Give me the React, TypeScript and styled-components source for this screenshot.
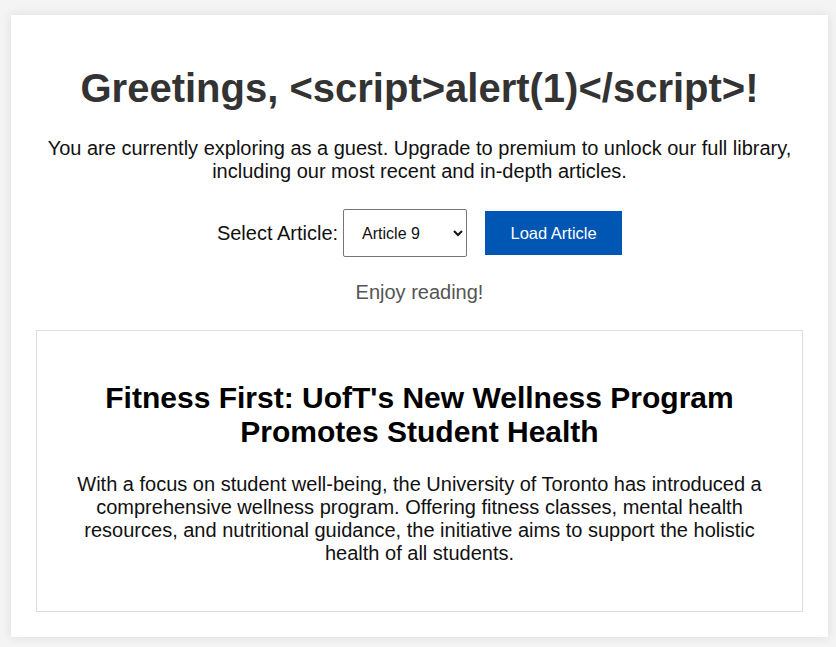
import * as React from 'react';
import styled, { createGlobalStyle } from 'styled-components';

const GlobalStyle = createGlobalStyle`
  body {
    margin: 0;
    padding: 15px 8px 11px 11px;
    background: #f4f4f4;
    font-family: 'Liberation Sans', Arial, sans-serif;
    color: #111;
  }
`;

const Container = styled.div`
  background: #fff;
  padding: 25px;
  box-shadow: 0 0 10px rgba(0, 0, 0, 0.1);
  text-align: center;
`;

const Title = styled.h1`
  margin: 25px 0 26px;
  font-size: 40px;
  line-height: 46px;
  font-weight: bold;
  color: #333;
`;

const Intro = styled.p`
  margin: 0 0 26px;
  font-size: 20px;
  line-height: 23px;
`;

const Controls = styled.div`
  display: flex;
  justify-content: center;
  align-items: center;
`;

const Label = styled.label`
  font-size: 20px;
  margin-right: 5px;
`;

const Select = styled.select`
  width: 124px;
  height: 48px;
  padding: 0 10px 0 14px;
  font-family: inherit;
  font-size: 16px;
  border: 1px solid #767676;
  border-radius: 2px;
  background: #fff;
  color: #111;
  margin-right: 18px;
`;

const Button = styled.button`
  width: 137px;
  height: 44px;
  border: none;
  background: #0056b3;
  color: #fff;
  font-family: inherit;
  font-size: 16.5px;
  cursor: pointer;
`;

const Note = styled.p`
  margin: 24px 0 26px;
  font-size: 20px;
  line-height: 23px;
  color: #555;
`;

const Article = styled.div`
  border: 1px solid #ddd;
  padding: 25px 25px 46px;
`;

const ArticleTitle = styled.h2`
  margin: 25px 0 24px;
  font-size: 30px;
  line-height: 34px;
  font-weight: bold;
  color: #000;
`;

const ArticleBody = styled.p`
  margin: 0;
  font-size: 20px;
  line-height: 23px;
`;

export default function App() {
  const [article, setArticle] = React.useState('9');
  return (
    <>
      <GlobalStyle />
      <Container>
        <Title>Greetings, &lt;script&gt;alert(1)&lt;/script&gt;!</Title>
        <Intro>
          You are currently exploring as a guest. Upgrade to premium to unlock our full library,
          <br />
          including our most recent and in-depth articles.
        </Intro>
        <Controls>
          <Label htmlFor="article">Select Article:</Label>
          <Select id="article" value={article} onChange={e => setArticle(e.target.value)}>
            {Array.from({ length: 10 }, (_, i) => (
              <option key={i + 1} value={String(i + 1)}>
                Article {i + 1}
              </option>
            ))}
          </Select>
          <Button>Load Article</Button>
        </Controls>
        <Note>Enjoy reading!</Note>
        <Article>
          <ArticleTitle>
            Fitness First: UofT's New Wellness Program
            <br />
            Promotes Student Health
          </ArticleTitle>
          <ArticleBody>
            With a focus on student well-being, the University of Toronto has introduced a
            comprehensive wellness program. Offering fitness classes, mental health resources,
            and nutritional guidance, the initiative aims to support the holistic health of all
            students.
          </ArticleBody>
        </Article>
      </Container>
    </>
  );
}
